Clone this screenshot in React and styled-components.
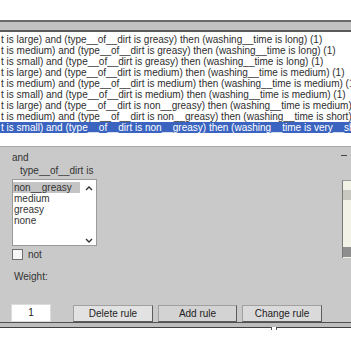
import React from "react";
import styled, { createGlobalStyle } from "styled-components";

const Global = createGlobalStyle`
  html, body { margin: 0; padding: 0; background: #ffffff; }
  body { font-family: "Liberation Sans", Arial, sans-serif; overflow: hidden; }
`;

const Screen = styled.div`
  width: 351px;
  height: 351px;
  overflow: hidden;
  background: #ffffff;
  display: flex;
  flex-direction: column;
`;

const TopGap = styled.div`
  height: 20px;
  flex: none;
`;

const HeaderBar = styled.div`
  height: 8px;
  flex: none;
  background: #c2c2c2;
  border-top: 2px solid #6a6a6a;
  border-bottom: 2px solid #5a5a5a;
`;

const RuleList = styled.div`
  padding-top: 2px;
  height: 112px;
  flex: none;
  background: #ffffff;
`;

const RuleRow = styled.div`
  height: 11px;
  line-height: 12px;
  font-size: 10px;
  white-space: nowrap;
  overflow: hidden;
  padding-left: 1px;
  color: ${(p) => (p.$selected ? "#ffffff" : "#2e2e2e")};
  background: ${(p) => (p.$selected ? "#3a64c0" : "transparent")};
`;

const Panel = styled.div`
  flex: none;
  height: 171px;
  background: #c9c9c9;
  border-top: 1px solid #a9a9a9;
  padding: 4px 0 0 12px;
  display: flex;
  flex-direction: column;
  color: #333;
  font-size: 10px;
`;

const Columns = styled.div`
  display: flex;
`;

const Column = styled.div`
  width: 90px;
  display: flex;
  flex-direction: column;
`;

const Label = styled.div`
  height: 13px;
  line-height: 13px;
  padding-left: ${(p) => p.$indent || 0}px;
  white-space: nowrap;
`;

const ListBox = styled.div`
  margin-top: 2px;
  height: 65px;
  background: #ffffff;
  border: 1px solid #9a9a9a;
  display: flex;
`;

const Items = styled.div`
  flex: 1;
  padding-top: 2px;
`;

const Item = styled.div`
  height: 11px;
  line-height: 11px;
  padding-left: 1px;
  background: ${(p) => (p.$active ? "#c4c4c4" : "transparent")};
`;

const ScrollCol = styled.div`
  width: 16px;
  box-sizing: border-box;
  display: flex;
  flex-direction: column;
  justify-content: space-between;
  align-items: flex-end;
  padding: 5px 3px 1px 0;
`;

const CheckRow = styled.div`
  margin-top: 3px;
  height: 11px;
  display: flex;
  align-items: center;
  gap: 5px;
`;

const CheckBox = styled.div`
  width: 9px;
  height: 9px;
  background: #f6f6f6;
  border: 1px solid #707070;
`;

const SideColumn = styled.div`
  margin-left: 243px;
  display: flex;
  flex-direction: column;
`;

const Dash = styled.div`
  margin-top: 4px;
  margin-left: 1px;
  width: 6px;
  height: 1px;
  background: #444;
`;

const SideBox = styled.div`
  margin-top: 24px;
  margin-left: 2px;
  width: 8px;
  height: 77px;
  background: #f3f2e6;
  border-left: 1px solid #7a7a7a;
  border-top: 1px solid #9a9a9a;
  display: flex;
  flex-direction: column;
`;

const SideBand = styled.div`
  margin-top: ${(p) => p.$top}px;
  height: ${(p) => p.$h}px;
  background: ${(p) => p.$c};
`;

const Weight = styled.div`
  margin-top: 10px;
  height: 13px;
  line-height: 13px;
  padding-left: 2px;
`;

const ButtonRow = styled.div`
  margin-top: 21px;
  display: flex;
  align-items: center;
`;

const WeightInput = styled.div`
  width: 38px;
  height: 16px;
  margin-left: -1px;
  background: #ffffff;
  border: 1px solid #dcdcdc;
  text-align: center;
  line-height: 16px;
  color: #222;
`;

const Button = styled.div`
  box-sizing: border-box;
  width: ${(p) => p.$w}px;
  height: 17px;
  margin-left: ${(p) => p.$ml}px;
  background: ${(p) => p.$bg};
  border: 1px solid #a0a0a0;
  border-right-color: #5c5c5c;
  border-bottom-color: #5c5c5c;
  text-align: center;
  line-height: 15px;
  font-size: 10px;
  color: #222;
`;

const BottomEdge = styled.div`
  flex: none;
  height: 4px;
  background: #bdbdbd;
  border-top: 1px solid #505050;
  border-bottom: 1px solid #404040;
  position: relative;
`;

const Notch = styled.div`
  position: absolute;
  left: 271px;
  top: 4px;
  width: 4px;
  height: 3px;
  border-left: 1px solid #505050;
  border-right: 1px solid #505050;
  background: #ffffff;
`;

const Chevron = ({ up }) => (
  <svg width="8" height="6" viewBox="0 0 8 6">
    <path
      d={up ? "M1 5 L4 2 L7 5" : "M1 1 L4 4 L7 1"}
      fill="none"
      stroke="#333"
      strokeWidth="1.4"
    />
  </svg>
);

const rules = [
  "t is large) and (type__of__dirt is greasy) then (washing__time is long) (1)",
  "t is medium) and (type__of__dirt is greasy) then (washing__time is long) (1)",
  "t is small) and (type__of__dirt is greasy) then (washing__time is long) (1)",
  "t is large) and (type__of__dirt is medium) then (washing__time is medium) (1)",
  "t is medium) and (type__of__dirt is medium) then (washing__time is medium) (1)",
  "t is small) and (type__of__dirt is medium) then (washing__time is medium) (1)",
  "t is large) and (type__of__dirt is non__greasy) then (washing__time is medium) (1)",
  "t is medium) and (type__of__dirt is non__greasy) then (washing__time is short) (1)",
  "t is small) and (type__of__dirt is non__greasy) then (washing__time is very__short) (1)",
];

const options = ["non__greasy", "medium", "greasy", "none"];

export default function App() {
  return (
    <>
      <Global />
      <Screen>
        <TopGap />
        <HeaderBar />
        <RuleList>
          {rules.map((r, i) => (
            <RuleRow key={i} $selected={i === rules.length - 1}>
              {r}
            </RuleRow>
          ))}
        </RuleList>
        <Panel>
          <Columns>
            <Column>
              <Label>and</Label>
              <Label $indent={8}>type__of__dirt is</Label>
              <ListBox>
                <Items>
                  {options.map((o, i) => (
                    <Item key={o} $active={i === 0}>
                      {o}
                    </Item>
                  ))}
                </Items>
                <ScrollCol>
                  <Chevron up />
                  <Chevron />
                </ScrollCol>
              </ListBox>
              <CheckRow>
                <CheckBox />
                <span>not</span>
              </CheckRow>
            </Column>
            <SideColumn>
              <Dash />
              <SideBox>
                <SideBand $top={9} $h={10} $c="#c8c8c0" />
                <SideBand $top={47} $h={10} $c="#8e8e8e" />
              </SideBox>
            </SideColumn>
          </Columns>
          <Weight>Weight:</Weight>
          <ButtonRow>
            <WeightInput>1</WeightInput>
            <Button $w={80} $ml={22} $bg="#e2e2e2">Delete rule</Button>
            <Button $w={79} $ml={5} $bg="#d3d3d3">Add rule</Button>
            <Button $w={80} $ml={5} $bg="#dadada">Change rule</Button>
          </ButtonRow>
        </Panel>
        <BottomEdge>
          <Notch />
        </BottomEdge>
      </Screen>
    </>
  );
}
